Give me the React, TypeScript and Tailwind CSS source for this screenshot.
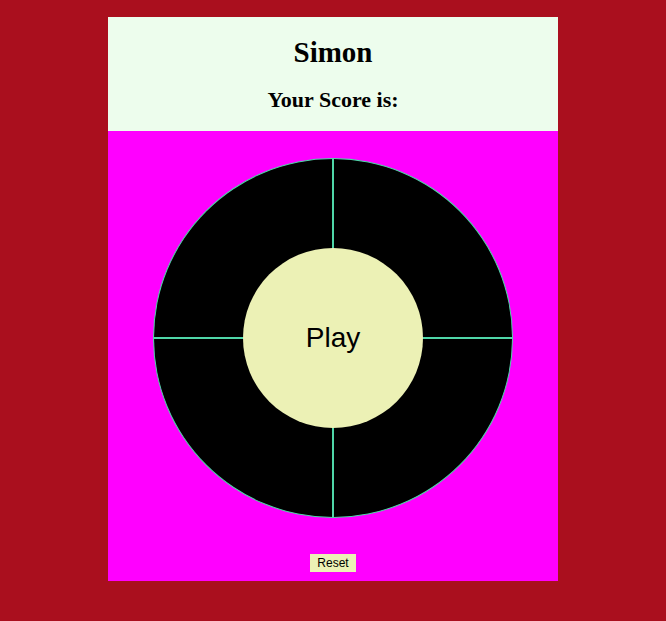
import React from "react";

export default function App() {
  const line = "border border-[#4fd6a8]";
  return (
    <div className="min-h-[621px] w-full bg-[#aa0f1e] pt-[17px]">
      <div className="mx-auto w-[450px]">
        <div className="h-[114px] bg-[#edfded] flex flex-col items-center" style={{ fontFamily: '"Liberation Serif", serif' }}>
          <h1 className="mt-[18px] text-[29px] leading-[34px] font-bold text-black">Simon</h1>
          <h2 className="mt-[19px] text-[22px] leading-[24px] font-bold text-black">Your Score is:</h2>
        </div>
        <div className="h-[450px] bg-[#ff00ff] flex flex-col items-center pt-[27px]">
          <div className="relative w-[360px] h-[360px]">
            <div className="grid grid-cols-2 grid-rows-2 w-[360px] h-[360px]">
              <div className={`box-border w-[180px] h-[180px] bg-black rounded-tl-[180px] ${line}`} />
              <div className={`box-border w-[180px] h-[180px] bg-black rounded-tr-[180px] ${line}`} />
              <div className={`box-border w-[180px] h-[180px] bg-black rounded-bl-[180px] ${line}`} />
              <div className={`box-border w-[180px] h-[180px] bg-black rounded-br-[180px] ${line}`} />
            </div>
            <div
              className="absolute left-[90px] top-[90px] w-[180px] h-[180px] rounded-full bg-[#ecf1b5] flex items-center justify-center text-[28px] text-black"
              style={{ fontFamily: '"Liberation Sans", Arial, sans-serif' }}
            >
              Play
            </div>
          </div>
          <button
            className="mt-[36px] h-[18px] px-[7px] bg-[#ecf1b5] text-[12px] leading-[18px] text-black"
            style={{ fontFamily: '"Liberation Sans", Arial, sans-serif' }}
          >
            Reset
          </button>
        </div>
      </div>
    </div>
  );
}
